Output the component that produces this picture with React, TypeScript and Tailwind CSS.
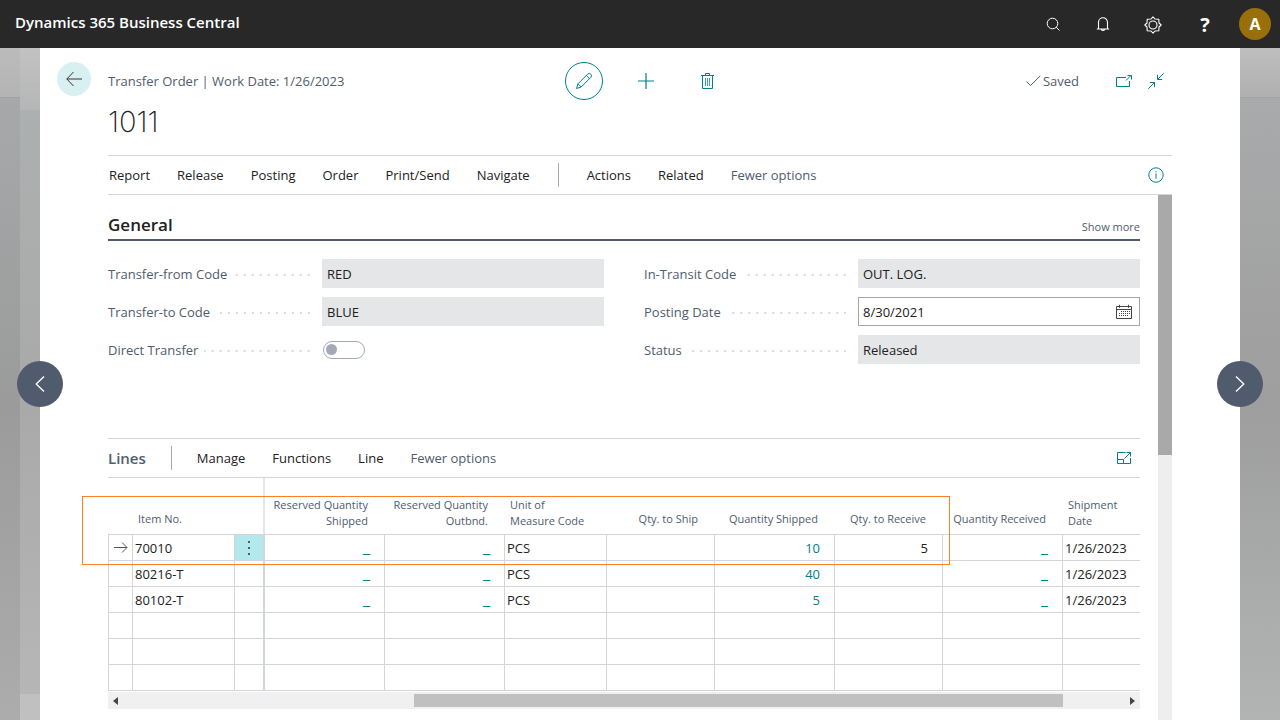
import React from 'react';
import clsx from 'clsx';

const TEAL = '#008089';

type Column = {
    key: string;
    label: string[];
    width: string;
    align?: 'right';
    kind?: 'link';
};

const columns: Column[] = [
    { key: 'resShipped', label: ['Reserved Quantity', 'Shipped'], width: 'w-[121px]', align: 'right', kind: 'link' },
    { key: 'resOutbnd', label: ['Reserved Quantity', 'Outbnd.'], width: 'w-[120px]', align: 'right', kind: 'link' },
    { key: 'uom', label: ['Unit of', 'Measure Code'], width: 'w-[102px]' },
    { key: 'toShip', label: ['Qty. to Ship'], width: 'w-[108px]', align: 'right' },
    { key: 'shipped', label: ['Quantity Shipped'], width: 'w-[120px]', align: 'right', kind: 'link' },
    { key: 'toReceive', label: ['Qty. to Receive'], width: 'w-[108px]', align: 'right' },
    { key: 'received', label: ['Quantity Received'], width: 'w-[120px]', align: 'right', kind: 'link' },
    { key: 'date', label: ['Shipment', 'Date'], width: '' },
];

const lines: Record<string, string>[] = [
    { item: '70010', resShipped: '_', resOutbnd: '_', uom: 'PCS', shipped: '10', toReceive: '5', received: '_', date: '1/26/2023' },
    { item: '80216-T', resShipped: '_', resOutbnd: '_', uom: 'PCS', shipped: '40', received: '_', date: '1/26/2023' },
    { item: '80102-T', resShipped: '_', resOutbnd: '_', uom: 'PCS', shipped: '5', received: '_', date: '1/26/2023' },
    {},
    {},
    {},
];

export default function App() {
    return (
        <div className="flex h-screen flex-col overflow-hidden bg-white font-['Open_Sans',sans-serif] text-[13px] text-[#212121]">
            <TopBar />
            <div className="relative flex min-h-0 flex-1">
                {/* dimmed pages behind the card */}
                <div className="flex w-5 shrink-0 flex-col">
                    <div className="h-[50px] border-b border-[#a2a2a2] bg-linear-to-b from-[#bbbbbb] to-[#b4b4b4]" />
                    <div className="flex-1 bg-linear-to-b from-[#a6a8aa] via-[#9a9b9a] to-[#acacac]" />
                </div>
                <div className="flex w-5 shrink-0 flex-col">
                    <div className="h-[62px] bg-linear-to-b from-[#c2c2c2] to-[#b5b6b6]" />
                    <div className="flex-1 bg-linear-to-b from-[#adb0b0] via-[#a9a9a9] to-[#b6b6b6]" />
                    <div className="h-[26px] bg-[#c0c0c0]" />
                </div>
                <main className="flex min-w-0 flex-1 flex-col bg-white">
                    <PageHeader />
                    <div className="flex min-h-0 flex-1 flex-col px-[68px]">
                        <ActionBar />
                        <div className="flex min-h-0 flex-1">
                            <div className="min-w-0 flex-1 pr-[18px]">
                                <General />
                                <Lines />
                            </div>
                            <div className="w-[14px] shrink-0 bg-[#eeeeee]">
                                <div className="h-[260px] bg-[#a9a9a9]" />
                            </div>
                        </div>
                    </div>
                </main>
                <div className="flex w-10 shrink-0 flex-col">
                    <div className="h-[50px] border-b border-[#a2a2a2] bg-linear-to-b from-[#bebebe] to-[#b0b0b0]" />
                    <div className="flex-1 bg-linear-to-b from-[#a9aaab] via-[#9e9e9e] to-[#b2b4b4]" />
                </div>
                <NavButton side="left" />
                <NavButton side="right" />
            </div>
        </div>
    );
}

function TopBar() {
    return (
        <header className="flex h-12 shrink-0 items-center bg-[#282828] pr-[9px] pl-[15px] text-white">
            <div className="flex-1 pb-1 text-[15px] font-semibold">Dynamics 365 Business Central</div>
            <IconButton label="Search" className="h-12 w-[50px]">
                <svg width="16" height="16" viewBox="0 0 16 16" fill="none" stroke="#fff">
                    <circle cx="7.5" cy="7.5" r="5.3" />
                    <path d="M11.2 11.2 14.5 14.5" />
                </svg>
            </IconButton>
            <IconButton label="Notifications" className="h-12 w-[50px]">
                <svg width="16" height="16" viewBox="0 0 16 16" fill="none" stroke="#fff" strokeWidth="1.1">
                    <path d="M3.5 13V6.2a4.5 4.5 0 0 1 9 0V13M1.8 13h12.4M6.3 13.2a1.8 1.8 0 0 0 3.4 0" />
                </svg>
            </IconButton>
            <IconButton label="Settings" className="h-12 w-[50px] pt-0.5">
                <svg width="18" height="18" viewBox="0 0 18 18" fill="none" stroke="#fff" strokeWidth="1.1" strokeLinejoin="round">
                    <circle cx="9" cy="9" r="4" />
                    <path d="M9 .8 11 3 14.8 3.2 15 7 17.2 9 15 11 14.8 14.8 11 15 9 17.2 7 15 3.2 14.8 3 11 .8 9 3 7 3.2 3.2 7 3Z" />
                </svg>
            </IconButton>
            <IconButton label="Help" className="ml-0.5 h-12 w-[50px] pt-0.5 text-xl font-bold">?</IconButton>
            <button className="ml-[9px] flex size-8 items-center justify-center rounded-full bg-[#986f0b] text-base font-bold">A</button>
        </header>
    );
}

function PageHeader() {
    return (
        <div className="shrink-0">
            <div className="grid h-[66px] grid-cols-[1fr_auto_1fr] items-center">
                <div className="flex items-center pl-[17px]">
                    <IconButton label="Back" className="mr-[17px] mb-1 size-[34px] rounded-full bg-[#d9f0f2]">
                        <svg width="16" height="16" viewBox="0 0 16 16" fill="none" stroke="#333">
                            <path d="M16 8H.8M7.5 1 .8 8l6.7 7" />
                        </svg>
                    </IconButton>
                    <span className="pt-px text-[#505c6d]">Transfer Order | Work Date: 1/26/2023</span>
                </div>
                <div className="flex items-center">
                    <IconButton label="Edit" className="size-[38px] rounded-full border border-[#008089]">
                        <svg width="18" height="18" viewBox="0 0 18 18" fill="none" stroke={TEAL} strokeLinejoin="round">
                            <path d="M1.5 16.5 3 11.8 12.6 2.2a2.1 2.1 0 0 1 3.2 3.2L6.2 15ZM3 11.8 6.2 15M11.3 3.5l3.2 3.2" />
                        </svg>
                    </IconButton>
                    <IconButton label="New" className="ml-[34px] size-[18px]">
                        <svg width="18" height="18" viewBox="0 0 18 18" stroke={TEAL} strokeWidth="1.2">
                            <path d="M9 1v16M1 9h16" />
                        </svg>
                    </IconButton>
                    <IconButton label="Delete" className="ml-[44px] h-[18px] w-[17px]">
                        <svg width="13" height="18" viewBox="0 0 13 18" fill="none" stroke={TEAL}>
                            <path d="M0 3.5h13M4.5 3.2V1.5h4v1.7M1.5 4v12.5h10V4" />
                            <path d="M4.5 6v8M6.5 6v8M8.5 6v8" strokeOpacity=".75" />
                        </svg>
                    </IconButton>
                </div>
                <div className="flex items-center justify-end pr-[76px]">
                    <svg width="15" height="12" viewBox="0 0 15 12" fill="none" stroke="#505c6d">
                        <path d="M.5 6.5 4.5 10.5 14.3.8" />
                    </svg>
                    <span className="ml-0.5 pt-px text-[#505c6d]">Saved</span>
                    <IconButton label="Open in new window" className="ml-[37px] size-4">
                        <svg width="16" height="14" viewBox="0 0 16 14" fill="none" stroke={TEAL}>
                            <path d="M10 3.5H.5v9h13V7M10 6.5l5-5M11.5 1.5h4v4" />
                        </svg>
                    </IconButton>
                    <IconButton label="Collapse" className="ml-4 size-4">
                        <svg width="16" height="16" viewBox="0 0 16 16" fill="none" stroke={TEAL}>
                            <path d="M15.8.2 9.5 6.5M9.5 1.8v4.7h4.7M.2 15.8 6.5 9.5M1.8 9.5h4.7v4.7" />
                        </svg>
                    </IconButton>
                </div>
            </div>
            <h1 className="h-[41px] pl-[68px] font-['Inter',sans-serif] text-[29px] leading-4 font-extralight">1011</h1>
        </div>
    );
}

function ActionBar() {
    return (
        <div className="flex h-10 shrink-0 items-center border-y border-[#d2d5da]">
            <div className="flex items-center gap-[27px] pl-px">
                {['Report', 'Release', 'Posting', 'Order', 'Print/Send', 'Navigate'].map((name) => (
                    <button key={name} className="pt-0.5">{name}</button>
                ))}
                <div className="mx-px h-6 w-px bg-[#a3a9b5]" />
                <button className="pt-0.5">Actions</button>
                <button className="pt-0.5">Related</button>
                <button className="pt-0.5 text-[#505c6d]">Fewer options</button>
            </div>
            <IconButton label="Details" className="mr-2 ml-auto size-4">
                <svg width="16" height="16" viewBox="0 0 16 16" fill="none" stroke={TEAL}>
                    <circle cx="8" cy="8" r="7.2" />
                    <path d="M8 6.5v5.2M8 4v1.3" />
                </svg>
            </IconButton>
        </div>
    );
}

function General() {
    return (
        <section className="h-[243px]">
            <div className="flex h-[46px] items-end justify-between border-b-2 border-[#505c6d]">
                <h2 className="pb-0.5 text-[17px] leading-6 font-semibold">General</h2>
                <button className="pb-0.5 text-[11px] leading-5 text-[#505c6d]">Show more</button>
            </div>
            <div className="mt-[18px] grid grid-cols-2 gap-x-10 gap-y-[9px]">
                <Field id="from" label="Transfer-from Code" value="RED" />
                <Field id="transit" label="In-Transit Code" value="OUT. LOG." />
                <Field id="to" label="Transfer-to Code" value="BLUE" />
                <Field id="posting" label="Posting Date" value="8/30/2021" editable />
                <div className="flex h-[29px] items-center">
                    <FieldLabel id="direct" label="Direct Transfer" />
                    <input
                        id="direct"
                        type="checkbox"
                        role="switch"
                        className="ml-px flex h-[18px] w-[42px] appearance-none items-center rounded-full border border-[#a3a9b5] px-0.5 before:size-[11px] before:rounded-full before:bg-[#a3a9b5] checked:justify-end"
                    />
                </div>
                <Field id="status" label="Status" value="Released" />
            </div>
        </section>
    );
}

function FieldLabel({ id, label }: { id: string; label: string }) {
    return (
        <label htmlFor={id} className="flex w-[214px] shrink-0 items-center pt-0.5 pr-3 text-[#505c6d]">
            {label}
            <span className="ml-1.5 h-0.5 flex-1 bg-[linear-gradient(to_left,#d8dade_2px,transparent_2px)] bg-[length:8px_2px] bg-right" />
        </label>
    );
}

function Field({ id, label, value, editable }: { id: string; label: string; value: string; editable?: boolean }) {
    return (
        <div className="flex h-[29px] items-center">
            <FieldLabel id={id} label={label} />
            <div
                className={clsx(
                    'flex h-full min-w-0 flex-1 items-center border pr-[7px] pl-1',
                    editable ? 'border-[#a6a6a6] bg-white' : 'border-[#e5e6e8] bg-[#e5e6e8]'
                )}
            >
                <input id={id} defaultValue={value} readOnly={!editable} className="min-w-0 flex-1 bg-transparent pt-0.5 outline-none" />
                {editable && (
                    <IconButton label="Choose date" className="size-4">
                        <svg width="16" height="16" viewBox="0 0 16 16" fill="none" stroke="#444">
                            <path d="M.5 2.5h15v12H.5ZM.5 5.5h15M3.5.8v3M12.5.8v3" />
                            <path d="M5 7.5h9M3 9.5h11M3 11.5h9" strokeDasharray="1 1" />
                        </svg>
                    </IconButton>
                )}
            </div>
        </div>
    );
}

function Lines() {
    return (
        <section>
            <div className="flex h-10 items-center border-y border-[#d2d5da]">
                <h2 className="text-[15px] font-semibold text-[#505c6d]">Lines</h2>
                <div className="mx-[25px] h-6 w-px bg-[#a3a9b5]" />
                <div className="flex gap-[27px] pt-px">
                    <button>Manage</button>
                    <button>Functions</button>
                    <button>Line</button>
                    <button className="text-[#505c6d]">Fewer options</button>
                </div>
                <IconButton label="Focus mode" className="mr-2 ml-auto size-4">
                    <svg width="16" height="14" viewBox="0 0 16 14" fill="none" stroke={TEAL}>
                        <path d="M9.5 1.5h-8v11h13V7M1.5 8.5h6v4M8.5 7.5l6-6M10.5 1.5h4v4" />
                    </svg>
                </IconButton>
            </div>
            <div className="relative">
                <table className="w-full table-fixed border-separate border-spacing-0">
                    <thead>
                        <tr className="h-[57px] text-[11px] leading-4 text-[#505c6d]">
                            <th className="w-6 border-b border-[#d2d5da]" />
                            <th className="w-[102px] border-b border-[#d2d5da] pb-[7px] pl-1.5 text-left align-bottom font-normal">Item No.</th>
                            <th className="w-[29px] border-b border-[#d2d5da]" />
                            {columns.map((col, i) => (
                                <th
                                    key={col.key}
                                    className={clsx(
                                        'border-b border-b-[#d2d5da] align-bottom font-normal whitespace-nowrap',
                                        col.width,
                                        i === 0 && 'border-l-2 border-l-[#e5e6e8]',
                                        col.label.length > 1 ? 'pb-[5px]' : 'pb-[7px]',
                                        col.align === 'right' ? 'pr-4 text-right' : 'pl-1.5 text-left'
                                    )}
                                >
                                    {col.label.map((text) => (
                                        <div key={text}>{text}</div>
                                    ))}
                                </th>
                            ))}
                        </tr>
                    </thead>
                    <tbody>
                        {lines.map((line, row) => (
                            <tr key={row} className="h-[26px] leading-5">
                                <td className="border-b border-l border-[#d2d5da] pl-[5px]">
                                    {row === 0 && (
                                        <svg width="14" height="12" viewBox="0 0 14 12" fill="none" stroke="#555">
                                            <path d="M0 5.5h13M8 .5l5 5-5 5" />
                                        </svg>
                                    )}
                                </td>
                                <td className="border-b border-l border-[#d2d5da] pl-0.5">{line.item}</td>
                                <td className={clsx('border-b border-l border-[#d2d5da]', row === 0 && 'bg-[#b2e9ec]')}>
                                    {row === 0 && (
                                        <IconButton label="Show more options" className="w-full">
                                            <svg width="2" height="14" viewBox="0 0 2 14" fill="#505c6d">
                                                <path d="M0 0h2v2H0ZM0 6h2v2H0ZM0 12h2v2H0Z" />
                                            </svg>
                                        </IconButton>
                                    )}
                                </td>
                                {columns.map((col, i) => (
                                    <td
                                        key={col.key}
                                        className={clsx(
                                            'border-b border-[#d2d5da]',
                                            i === 0 ? 'border-l-2' : 'border-l',
                                            col.align === 'right' ? 'pr-[14px] text-right' : 'pl-0.5'
                                        )}
                                    >
                                        {col.kind === 'link' && line[col.key] ? (
                                            <a href="#" className={clsx('text-[#008089]', line[col.key] === '_' && 'text-base leading-5')}>
                                                {line[col.key]}
                                            </a>
                                        ) : (
                                            line[col.key]
                                        )}
                                    </td>
                                ))}
                            </tr>
                        ))}
                    </tbody>
                </table>
                {/* callout around the first line */}
                <div className="pointer-events-none absolute top-[18px] -left-[26px] h-[69px] w-[868px] border border-[#ff7f27]" />
            </div>
            <div className="mt-px flex h-[17px] items-center bg-[#f0f0f0] px-[5px]">
                <svg width="5" height="8" viewBox="0 0 5 8" fill="#444">
                    <path d="M5 0v8L0 4Z" />
                </svg>
                <div className="flex flex-1 px-[7px]">
                    <div className="h-[13px] w-[29%]" />
                    <div className="h-[13px] w-[65%] bg-[#c0c0c0]" />
                </div>
                <svg width="5" height="8" viewBox="0 0 5 8" fill="#444">
                    <path d="M0 0v8l5-4Z" />
                </svg>
            </div>
        </section>
    );
}

function NavButton({ side }: { side: 'left' | 'right' }) {
    return (
        <button
            aria-label={side === 'left' ? 'Previous record' : 'Next record'}
            className={clsx(
                'absolute top-1/2 flex size-[46px] -translate-y-1/2 items-center justify-center rounded-full bg-[#505c6d]',
                side === 'left' ? 'left-[17px]' : 'right-[17px]'
            )}
        >
            <svg width="10" height="16" viewBox="0 0 10 16" fill="none" stroke="#fff" strokeWidth="1.3">
                <path d={side === 'left' ? 'M9 .5 1.2 8 9 15.5' : 'M1 .5 8.8 8 1 15.5'} />
            </svg>
        </button>
    );
}

function IconButton({ label, className, children }: { label: string; className?: string; children: React.ReactNode }) {
    return (
        <button aria-label={label} className={clsx('flex shrink-0 items-center justify-center', className)}>
            {children}
        </button>
    );
}
